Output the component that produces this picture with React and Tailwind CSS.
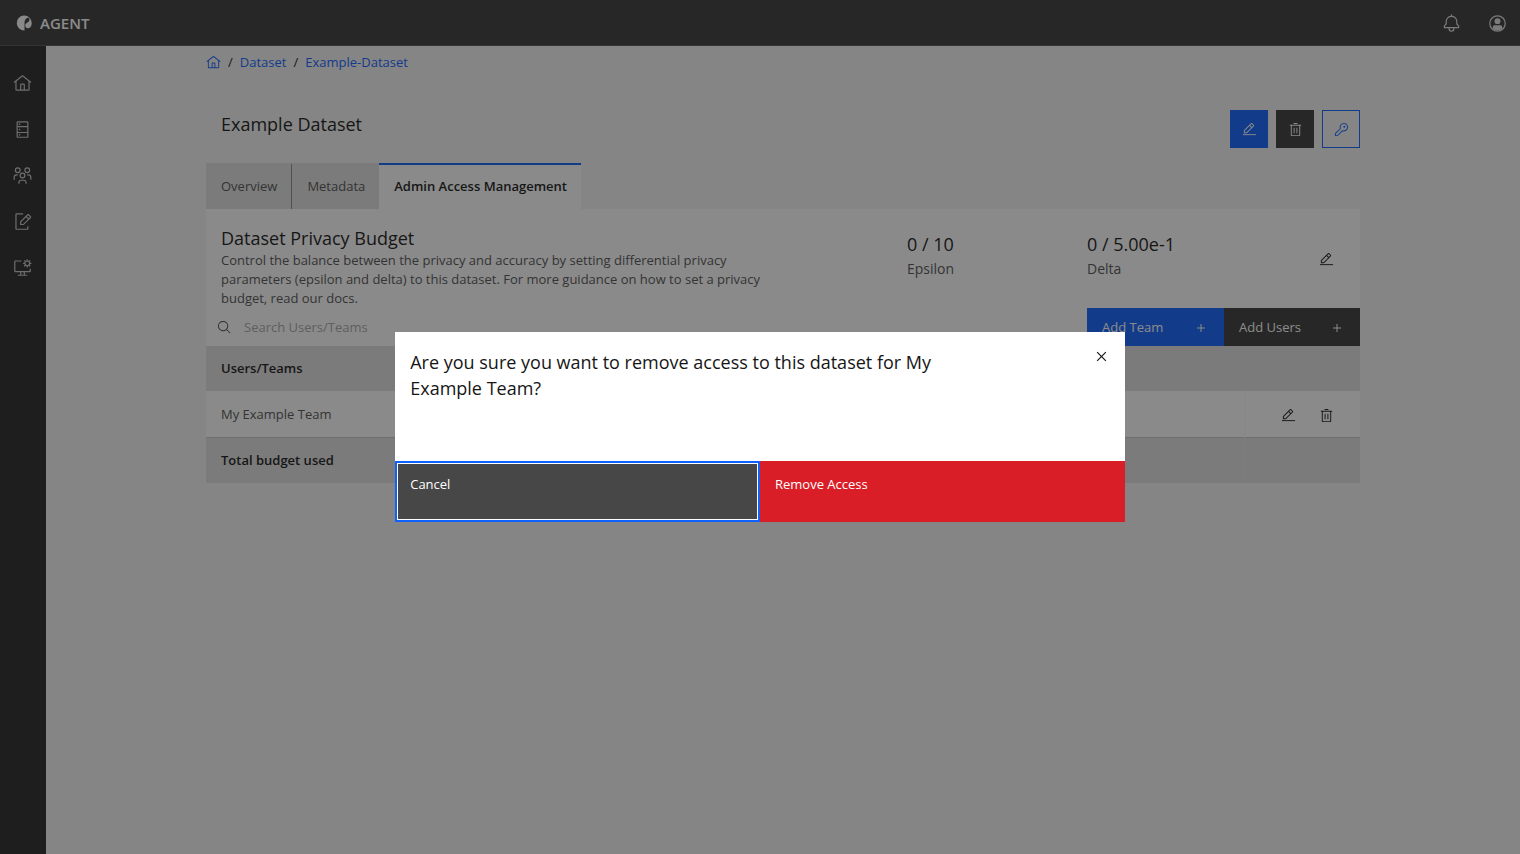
import React from 'react';
import clsx from 'clsx';

const Icon = ({ className = 'size-4', children }) => (
  <svg viewBox="0 0 32 32" fill="currentColor" aria-hidden="true" className={clsx('shrink-0', className)}>
    {children}
  </svg>
);

const HomeIcon = (props) => (
  <Icon {...props}>
    <path d="M16.61,2.21a1,1,0,0,0-1.24,0L1,13.42,2.24,15,4,13.62V26a2,2,0,0,0,2,2H26a2,2,0,0,0,2-2V13.63L29.76,15,31,13.43ZM18,26H14V18h4Zm2,0V18a2,2,0,0,0-2-2H14a2,2,0,0,0-2,2v8H6V12.06L16,4.27l10,7.8V26Z" />
  </Icon>
);

const ServerIcon = (props) => (
  <Icon {...props}>
    <path d="M24 2H8a2 2 0 0 0-2 2v24a2 2 0 0 0 2 2h16a2 2 0 0 0 2-2V4a2 2 0 0 0-2-2Zm0 2v6H8V4Zm0 16H8v-8h16ZM8 28v-6h16v6Z" />
    <circle cx="11" cy="7" r="1.4" />
    <circle cx="11" cy="16" r="1.4" />
    <circle cx="11" cy="25" r="1.4" />
  </Icon>
);

const TeamsIcon = (props) => (
  <Icon {...props}>
    <path d="M26,14H24v2h2a3,3,0,0,1,3,3v4h2V19A5,5,0,0,0,26,14Z" />
    <path d="M24 4a3 3 0 1 1-3 3 3 3 0 0 1 3-3m0-2a5 5 0 1 0 5 5 5 5 0 0 0-5-5Z" />
    <path d="M23 30H21V28a3 3 0 0 0-3-3H14a3 3 0 0 0-3 3v2H9V28a5 5 0 0 1 5-5h4a5 5 0 0 1 5 5Z" />
    <path d="M16 13a3 3 0 1 1-3 3 3 3 0 0 1 3-3m0-2a5 5 0 1 0 5 5 5 5 0 0 0-5-5Z" />
    <path d="M8 14H6a5 5 0 0 0-5 5v4H3V19a3 3 0 0 1 3-3H8Z" />
    <path d="M8 4A3 3 0 1 1 5 7 3 3 0 0 1 8 4M8 2a5 5 0 1 0 5 5A5 5 0 0 0 8 2Z" />
  </Icon>
);

const RequestIcon = (props) => (
  <Icon {...props}>
    <path d="M26 24v4a2 2 0 0 1-2 2H6a2 2 0 0 1-2-2V4a2 2 0 0 1 2-2h11v2H6v24h18v-4Z" />
    <path d="M30.1 7.1 26.9 3.9a2 2 0 0 0-2.8 0L12 16v6h6L30.1 9.9a2 2 0 0 0 0-2.8ZM17.2 20H14v-3.2l8-8 3.2 3.2ZM26.6 10.6 23.4 7.4l2.1-2.1 3.2 3.2Z" />
  </Icon>
);

const ScreenSettingsIcon = (props) => (
  <Icon {...props}>
    <path d="M28 18v4H4V6h10V4H4a2 2 0 0 0-2 2v16a2 2 0 0 0 2 2h8v4H8v2h16v-2h-4v-4h8a2 2 0 0 0 2-2v-4ZM18 28h-4v-4h4Z" />
    <circle cx="24" cy="9" r="4" fill="none" stroke="currentColor" strokeWidth="2" />
    <path
      fill="none"
      stroke="currentColor"
      strokeWidth="2"
      d="M24 5V2M24 16v-3M28 9h3M17 9h3M26.8 6.2 29 4M19 14l2.2-2.2M26.8 11.8 29 14M19 4l2.2 2.2"
    />
  </Icon>
);

const BellIcon = (props) => (
  <Icon {...props}>
    <path d="M28.7071,19.293,26,16.5859V13a10.0136,10.0136,0,0,0-9-9.9492V1H15V3.0508A10.0136,10.0136,0,0,0,6,13v3.5859L3.2929,19.293A1,1,0,0,0,3,20v3a1,1,0,0,0,1,1h7v.7768a5.152,5.152,0,0,0,4.5,5.1987A5.0057,5.0057,0,0,0,21,25V24h7a1,1,0,0,0,1-1V20A1,1,0,0,0,28.7071,19.293ZM19,25a3,3,0,0,1-6,0V24h6Zm8-3H5V20.4141L7.707,17.707A1,1,0,0,0,8,17V13a8,8,0,0,1,16,0v4a1,1,0,0,0,.293.707L27,20.4141Z" />
  </Icon>
);

const AvatarIcon = (props) => (
  <Icon {...props}>
    <circle cx="16" cy="16" r="13" fill="none" stroke="currentColor" strokeWidth="2" />
    <circle cx="16" cy="12" r="5" />
    <path d="M8 25v-3a3 3 0 0 1 3-3h10a3 3 0 0 1 3 3v3a12 12 0 0 1-16 0Z" />
  </Icon>
);

const EditIcon = (props) => (
  <Icon {...props}>
    <path d="M2 26H30V28H2z" />
    <path d="M25.4,9c0.8-0.8,0.8-2,0-2.8l-3.6-3.6c-0.8-0.8-2-0.8-2.8,0l-15,15V24h6.4L25.4,9z M20.4,4L24,7.6l-3,3L17.4,7L20.4,4z M6,22v-3.6l10-10l3.6,3.6l-10,10H6z" />
  </Icon>
);

const TrashIcon = (props) => (
  <Icon {...props}>
    <path d="M12 12H14V24H12zM18 12H20V24H18zM12 2H20V4H12z" />
    <path d="M4,6V8H6V28a2,2,0,0,0,2,2H24a2,2,0,0,0,2-2V8h2V6ZM8,28V8H24V28Z" />
  </Icon>
);

const KeyIcon = (props) => (
  <Icon {...props}>
    <path d="M21,2a8.9977,8.9977,0,0,0-8.6119,11.6118L2,24v6H8L18.3881,19.6118A9,9,0,1,0,21,2Zm0,16a7.0125,7.0125,0,0,1-2.0322-.3022L17.821,17.35l-.8472.8472L7.1716,28H4V24.8284l9.8023-9.8023.8472-.8474-.3473-1.1467A7,7,0,1,1,21,18Z" />
    <circle cx="22" cy="10" r="2" />
  </Icon>
);

const AddIcon = (props) => (
  <Icon {...props}>
    <path d="M17 15L17 8 15 8 15 15 8 15 8 17 15 17 15 24 17 24 17 17 24 17 24 15z" />
  </Icon>
);

const CloseIcon = (props) => (
  <Icon {...props}>
    <path d="M24 9.4L22.6 8 16 14.6 9.4 8 8 9.4 14.6 16 8 22.6 9.4 24 16 17.4 22.6 24 24 22.6 17.4 16 24 9.4z" />
  </Icon>
);

const SearchIcon = (props) => (
  <Icon {...props}>
    <path d="M29,27.5859l-7.5521-7.5521a11.0177,11.0177,0,1,0-1.4141,1.4141L27.5859,29ZM4,13a9,9,0,1,1,9,9A9.01,9.01,0,0,1,4,13Z" />
  </Icon>
);

const Logo = () => (
  <Icon className="size-4">
    <path
      fillRule="evenodd"
      d="M17 31A15 15 0 1 1 31.500 16c0 6-3 10.500-7 10.500-3 0-5-1-6-3.500H17ZM20.500 7c3-2.500 6.500-1 6.500 2 0 5-6 6-8.500 10V23H17V15c0-3 1.500-6 3.500-8Z"
    />
  </Icon>
);

const navItems = [
  { label: 'Home', icon: HomeIcon },
  { label: 'Datasets', icon: ServerIcon },
  { label: 'Teams', icon: TeamsIcon },
  { label: 'Requests', icon: RequestIcon },
  { label: 'Settings', icon: ScreenSettingsIcon }
];

const tabs = [
  { label: 'Overview', active: false },
  { label: 'Metadata', active: false },
  { label: 'Admin Access Management', active: true }
];

const Header = () => (
  <header className="flex h-[46px] items-center justify-between border-b border-[#525252] bg-[#393939] pt-px pr-[13px] pl-4 text-white">
    <a href="#" className="flex items-center gap-2 text-[15px] font-semibold">
      <Logo />
      AGENT
    </a>
    <div className="flex items-center gap-[27px] text-[#e0e0e0]">
      <button type="button" aria-label="Notifications">
        <BellIcon className="size-[19px]" />
      </button>
      <button type="button" aria-label="Account">
        <AvatarIcon className="size-[19px]" />
      </button>
    </div>
  </header>
);

const SideNav = () => (
  <nav className="flex w-[46px] shrink-0 flex-col bg-[#262626] pt-3.5 text-[#c6c6c6]">
    {navItems.map(({ label, icon: NavIcon }) => (
      <a key={label} href="#" aria-label={label} className="flex h-[46px] items-center pl-[13px]">
        <NavIcon className="size-[19px]" />
      </a>
    ))}
  </nav>
);

const Breadcrumb = () => (
  <nav className="flex h-[33px] items-center gap-[7px] text-[#0f62fe]">
    <a href="#" aria-label="Home">
      <HomeIcon className="size-[15px]" />
    </a>
    <span className="text-[#161616]">/</span>
    <a href="#">Dataset</a>
    <span className="text-[#161616]">/</span>
    <a href="#">Example-Dataset</a>
  </nav>
);

const Tabs = () => (
  <div role="tablist" className="flex h-[46px]">
    {tabs.map((tab, index) => (
      <button
        key={tab.label}
        type="button"
        role="tab"
        aria-selected={tab.active}
        className={clsx(
          'border-t-2 pr-3.5 pl-[15px]',
          tab.active
            ? 'border-t-[#0f62fe] bg-white font-semibold text-[#161616]'
            : 'border-t-[#e0e0e0] bg-[#e0e0e0] text-[#525252]',
          index === 1 && 'border-l border-l-[#8d8d8d]'
        )}
      >
        {tab.label}
      </button>
    ))}
  </div>
);

const Budget = () => (
  <div className="flex pt-[17px]">
    <div className="flex-1 pl-[15px]">
      <h2 className="text-lg leading-[25px] text-[#161616]">Dataset Privacy Budget</h2>
      <p className="max-w-[540px] leading-[19px] text-[#525252]">
        Control the balance between the privacy and accuracy by setting differential privacy
        parameters (epsilon and delta) to this dataset. For more guidance on how to set a privacy
        budget, read our docs.
      </p>
    </div>
    <div className="w-[180px] pt-1.5">
      <div className="text-lg leading-[25px] text-[#161616]">0 / 10</div>
      <div className="text-sm leading-6 text-[#525252]">Epsilon</div>
    </div>
    <div className="flex w-[273px] items-start justify-between pt-1.5 pr-[26px]">
      <div>
        <div className="text-lg leading-[25px] text-[#161616]">0 / 5.00e-1</div>
        <div className="text-sm leading-6 text-[#525252]">Delta</div>
      </div>
      <button type="button" aria-label="Edit budget" className="pt-5 text-[#161616]">
        <EditIcon className="size-[15px]" />
      </button>
    </div>
  </div>
);

const Toolbar = () => (
  <div className="flex h-[38px]">
    <label className="flex flex-1 items-center gap-3 pl-[11px] text-[#525252]">
      <SearchIcon className="size-[15px]" />
      <input
        type="text"
        aria-label="Search Users/Teams"
        placeholder="Search Users/Teams"
        className="w-full bg-transparent pt-0.5 outline-none placeholder:text-[#a8a8a8]"
      />
    </label>
    <button type="button" className="flex w-[137px] items-center justify-between bg-[#0f62fe] px-[15px] pt-px text-white">
      Add Team
      <AddIcon />
    </button>
    <button type="button" className="flex w-[136px] items-center justify-between bg-[#393939] px-[15px] pt-px text-white">
      Add Users
      <AddIcon />
    </button>
  </div>
);

const AccessTable = () => (
  <table className="w-full text-left text-[#161616]">
    <thead>
      <tr className="h-[45px] bg-[#e0e0e0]">
        <th className="px-[15px] font-semibold">Users/Teams</th>
        <th className="w-[116px]" aria-label="Actions" />
      </tr>
    </thead>
    <tbody>
      <tr className="h-[46px] border-b border-[#c6c6c6] bg-white">
        <td className="px-[15px] pt-0.5 text-[#525252]">My Example Team</td>
        <td className="border-l border-l-[#f7f7f7] pt-0.5 pr-[26px]">
          <div className="flex justify-end gap-[23px] pt-px">
            <button type="button" aria-label="Edit My Example Team">
              <EditIcon className="size-[15px]" />
            </button>
            <button type="button" aria-label="Remove My Example Team">
              <TrashIcon className="size-[15px]" />
            </button>
          </div>
        </td>
      </tr>
    </tbody>
    <tfoot>
      <tr className="h-[46px] bg-[#e0e0e0]">
        <td className="px-[15px] font-semibold">Total budget used</td>
        <td className="border-l border-l-[#e5e5e5]" />
      </tr>
    </tfoot>
  </table>
);

const RemoveAccessModal = () => (
  <div className="fixed inset-0 flex items-center justify-center bg-[#161616]/50">
    <div role="dialog" aria-modal="true" aria-labelledby="modal-title" className="w-[48%] bg-white">
      <div className="flex min-h-[129px] items-start justify-between pt-[17px] pl-[15px]">
        <h3 id="modal-title" className="w-3/4 text-lg leading-[26px] text-[#161616]">
          Are you sure you want to remove access to this dataset for My Example Team?
        </h3>
        <button type="button" aria-label="Close" className="-mt-0.5 mr-3.5 text-[#161616]">
          <CloseIcon className="size-[19px]" />
        </button>
      </div>
      <div className="grid h-[61px] grid-cols-2 text-white">
        <button
          type="button"
          className="flex items-start border-2 border-[#0f62fe] bg-[#474747] px-[13px] pt-3 inset-ring inset-ring-white"
        >
          Cancel
        </button>
        <button type="button" className="flex items-start bg-[#da1e28] px-[15px] pt-3.5">
          Remove Access
        </button>
      </div>
    </div>
  </div>
);

const App = () => (
  <div className="flex min-h-screen flex-col bg-[#f4f4f4] font-['Open_Sans','Noto_Sans',sans-serif] text-[13px]">
    <Header />
    <div className="flex flex-1">
      <SideNav />
      <main className="flex-1 px-40">
        <Breadcrumb />
        <div className="mt-[31px] mb-[15px] flex items-start justify-between">
          <h1 className="pl-[15px] text-lg text-[#161616]">Example Dataset</h1>
          <div className="flex gap-2">
            <button type="button" aria-label="Edit" className="flex size-[38px] items-center justify-center bg-[#0f62fe] text-white">
              <EditIcon className="size-[15px]" />
            </button>
            <button type="button" aria-label="Delete" className="flex size-[38px] items-center justify-center bg-[#393939] text-white">
              <TrashIcon className="size-[15px]" />
            </button>
            <button type="button" aria-label="Access key" className="flex size-[38px] items-center justify-center border border-[#0f62fe] text-[#0f62fe]">
              <KeyIcon className="size-[15px]" />
            </button>
          </div>
        </div>
        <Tabs />
        <section className="bg-white">
          <Budget />
          <Toolbar />
          <AccessTable />
        </section>
      </main>
    </div>
    <RemoveAccessModal />
  </div>
);

export default App;
